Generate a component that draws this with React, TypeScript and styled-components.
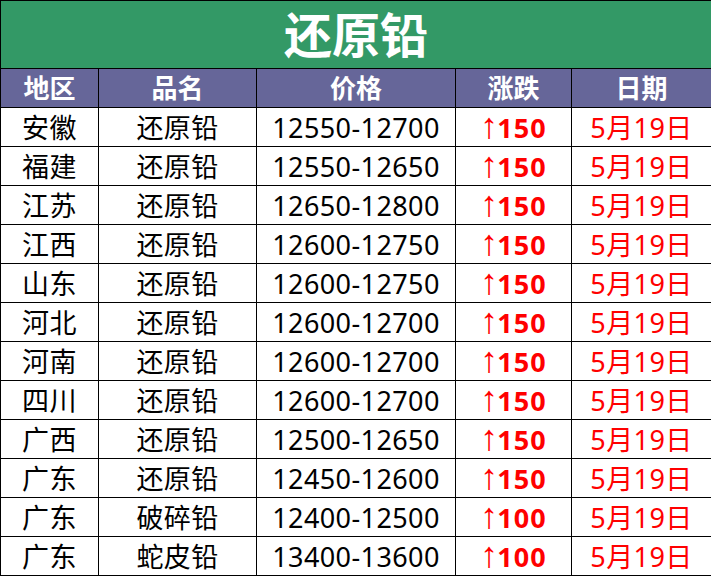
import React from "react";
import styled, { createGlobalStyle } from "styled-components";

const GlobalStyle = createGlobalStyle`
  html, body {
    margin: 0;
    padding: 0;
    background: #fff;
  }
  body {
    font-family: "Noto Sans", "Noto Sans CJK SC", sans-serif;
  }
`;

const Sheet = styled.div`
  width: 711px;
  height: 576px;
  overflow: hidden;
`;

const Table = styled.table`
  width: 711px;
  border-collapse: collapse;
  table-layout: fixed;
`;

const TitleCell = styled.th`
  height: 67px;
  padding: 0;
  background: #339966;
  color: #fff;
  font-size: 48px;
  font-weight: 700;
  border: 1.5px solid #000;
  line-height: 1;
`;

const HeadCell = styled.th`
  height: 38px;
  padding: 0;
  background: #666699;
  color: #fff;
  font-size: 26px;
  font-weight: 700;
  border: 1.5px solid #000;
  line-height: 1;
`;

const Cell = styled.td<{ $red?: boolean; $bold?: boolean }>`
  height: 38px;
  padding: 0;
  text-align: center;
  color: ${(p) => (p.$red ? "#ff0000" : "#000")};
  font-size: 27px;
  font-weight: ${(p) => (p.$bold ? 700 : 400)};
  letter-spacing: ${(p) => (p.$bold ? "1px" : "0.4px")};
  border: 1.5px solid #000;
  line-height: 1;
  white-space: nowrap;
`;

const Arrow = styled.span`
  font-family: "Liberation Sans", sans-serif;
  font-weight: 400;
  font-size: 36px;
  line-height: 0;
  letter-spacing: 0;
  margin-right: -1px;
`;

const rows = [
  ["安徽", "还原铅", "12550-12700", "150"],
  ["福建", "还原铅", "12550-12650", "150"],
  ["江苏", "还原铅", "12650-12800", "150"],
  ["江西", "还原铅", "12600-12750", "150"],
  ["山东", "还原铅", "12600-12750", "150"],
  ["河北", "还原铅", "12600-12700", "150"],
  ["河南", "还原铅", "12600-12700", "150"],
  ["四川", "还原铅", "12600-12700", "150"],
  ["广西", "还原铅", "12500-12650", "150"],
  ["广东", "还原铅", "12450-12600", "150"],
  ["广东", "破碎铅", "12400-12500", "100"],
  ["广东", "蛇皮铅", "13400-13600", "100"],
];

export default function App() {
  return (
    <Sheet>
      <GlobalStyle />
      <Table>
        <colgroup>
          <col style={{ width: 98 }} />
          <col style={{ width: 158 }} />
          <col style={{ width: 199 }} />
          <col style={{ width: 116 }} />
          <col style={{ width: 140 }} />
        </colgroup>
        <thead>
          <tr>
            <TitleCell colSpan={5}>还原铅</TitleCell>
          </tr>
          <tr>
            <HeadCell>地区</HeadCell>
            <HeadCell>品名</HeadCell>
            <HeadCell>价格</HeadCell>
            <HeadCell>涨跌</HeadCell>
            <HeadCell>日期</HeadCell>
          </tr>
        </thead>
        <tbody>
          {rows.map((r, i) => (
            <tr key={i}>
              <Cell>{r[0]}</Cell>
              <Cell>{r[1]}</Cell>
              <Cell>{r[2]}</Cell>
              <Cell $red $bold>
                <Arrow>↑</Arrow>
                {r[3]}
              </Cell>
              <Cell $red>5月19日</Cell>
            </tr>
          ))}
        </tbody>
      </Table>
    </Sheet>
  );
}
